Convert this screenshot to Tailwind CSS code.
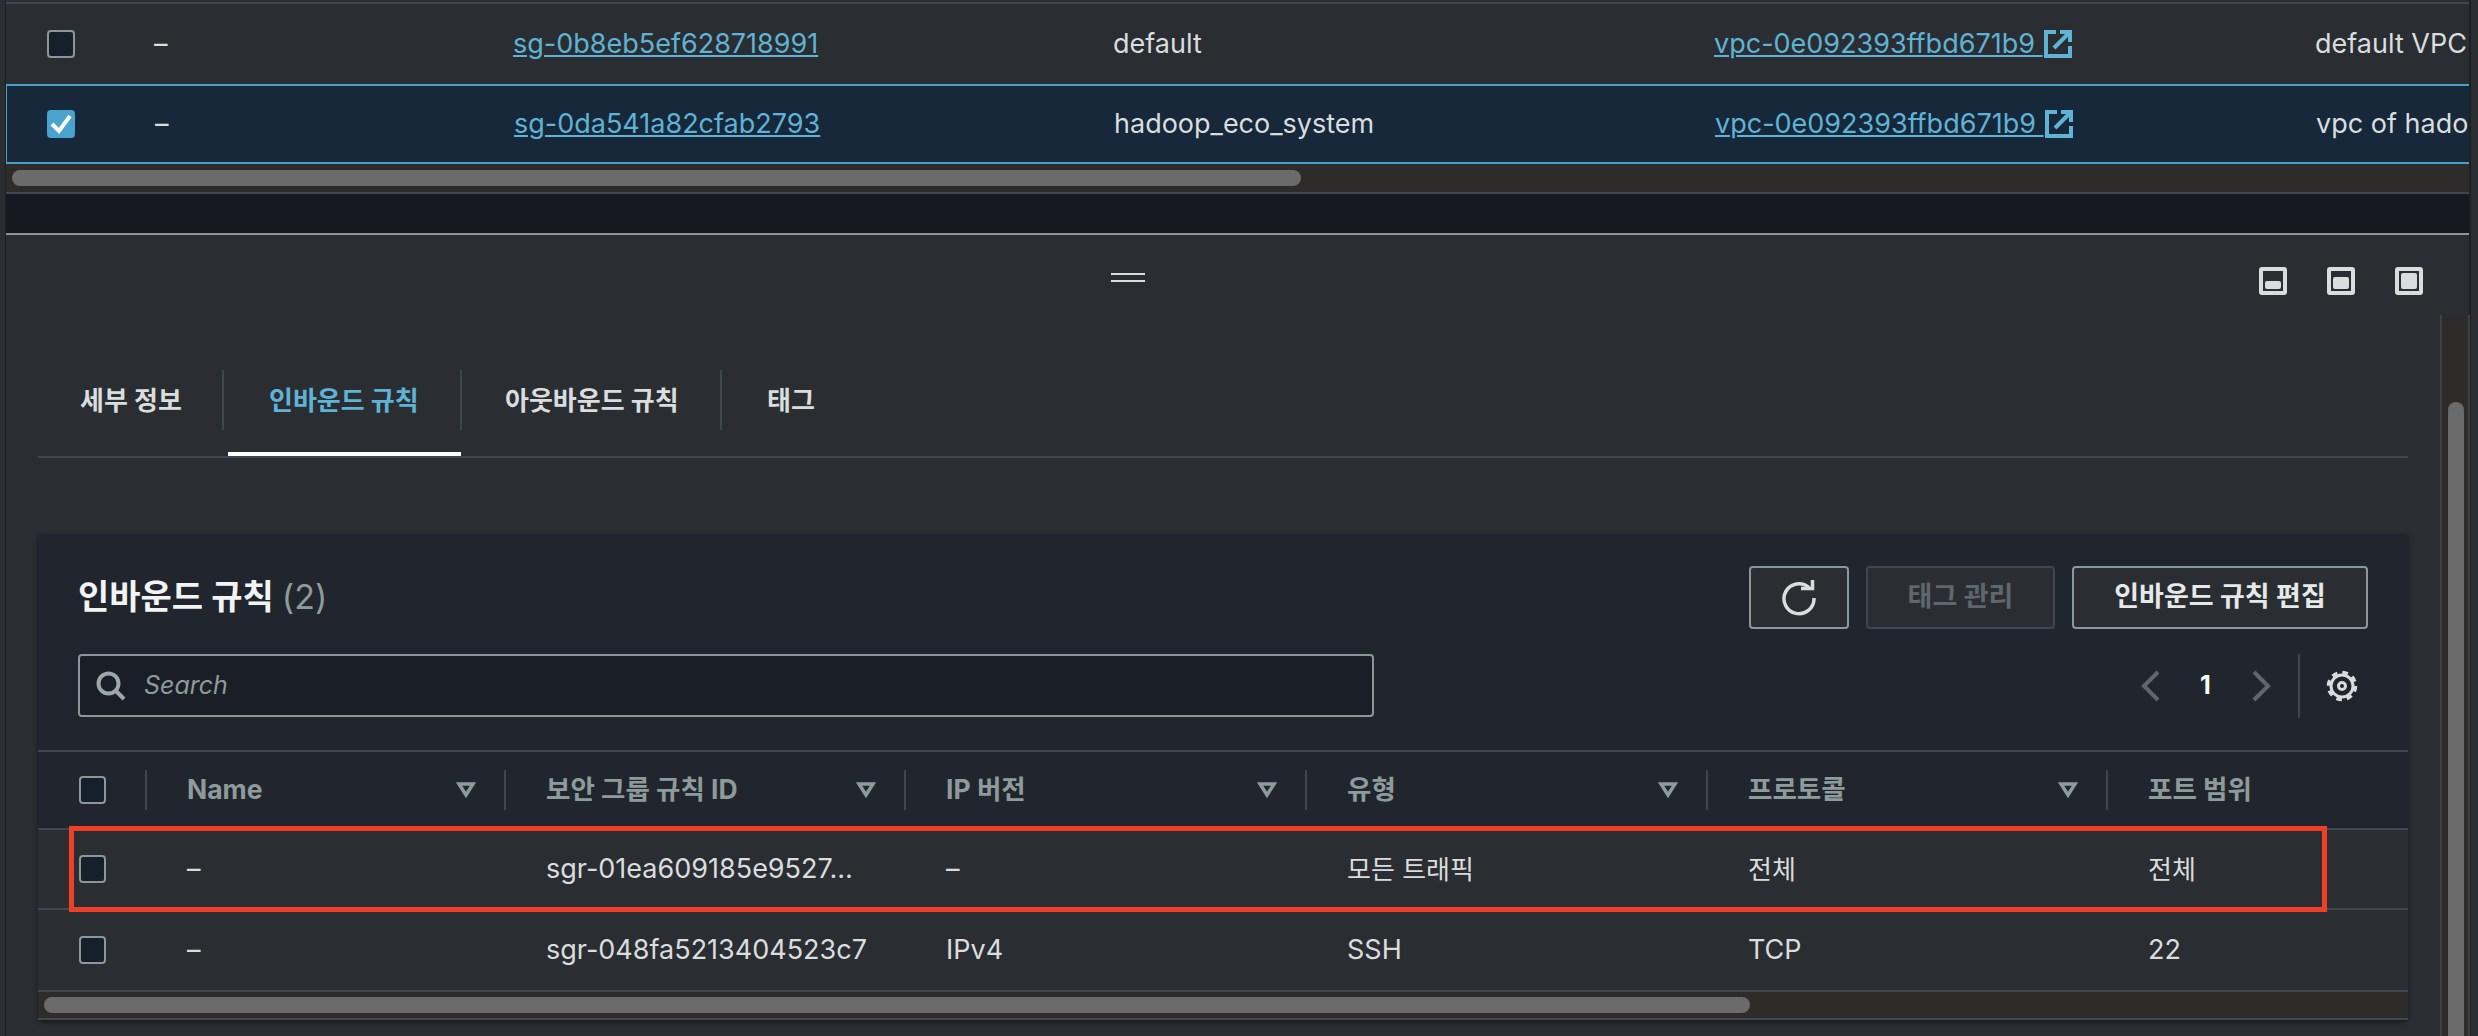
<!DOCTYPE html>
<html lang="ko">
<head>
    <meta charset="UTF-8">
    <title>Security Groups - Inbound Rules</title>
    <script src="https://cdn.jsdelivr.net/npm/@tailwindcss/browser@4"></script>
</head>
<body class="bg-[#2a2e33]">
<div class="relative w-[2478px] h-[1036px] overflow-hidden bg-[#2a2e33] text-[27px] text-[#d9dddd] [font-family:'Inter','Noto_Sans_CJK_KR',sans-serif]">
    <div class="ml-[5px] w-[2466px] h-full border-l border-r-2 border-[#1d2025] flex flex-col">

        <!-- Security group list -->
        <div class="h-[2px]"></div>
        <div class="h-[2px] bg-[#414750]"></div>
        <div class="h-[80px] grid grid-cols-[148px_359px_600px_601px_601px_1fr] items-center overflow-hidden">
            <div class="pl-[41px]"><div class="w-[28px] h-[28px] rounded-[4px] border-2 border-[#8d9799] bg-[#16202c]"></div></div>
            <div>–</div>
            <div><a href="#" class="text-[#5fb3d5] underline">sg-0b8eb5ef628718991</a></div>
            <div>default</div>
            <div>
                <a href="#" class="inline-flex items-center text-[#5fb3d5] underline whitespace-pre">vpc-0e092393ffbd671b9&nbsp;<svg class="w-[28px] h-[28px] ml-[1px]" viewBox="0 0 28 28" fill="none" stroke="#5fb3d5" stroke-width="4"><path d="M12 2H2v24h24V16"/><path d="M10 18 24 4"/><path d="M16 2h10v10" stroke-width="4"/></svg></a>
            </div>
            <div class="whitespace-nowrap">default VPC</div>
        </div>
        <div class="h-[80px] grid grid-cols-[148px_359px_600px_601px_601px_1fr] items-center overflow-hidden bg-[#16283a] border-y-2 border-l border-[#4a9fc9]">
            <div class="pl-[40px]">
                <div class="w-[28px] h-[28px] rounded-[4px] bg-[#4aa3cd] flex items-center justify-center">
                    <svg class="w-[22px] h-[22px]" viewBox="0 0 22 22" fill="none" stroke="#fff" stroke-width="4"><path d="M2 11l7 7L20 3"/></svg>
                </div>
            </div>
            <div>–</div>
            <div><a href="#" class="text-[#5fb3d5] underline">sg-0da541a82cfab2793</a></div>
            <div>hadoop_eco_system</div>
            <div>
                <a href="#" class="inline-flex items-center text-[#5fb3d5] underline whitespace-pre">vpc-0e092393ffbd671b9&nbsp;<svg class="w-[28px] h-[28px] ml-[1px]" viewBox="0 0 28 28" fill="none" stroke="#5fb3d5" stroke-width="4"><path d="M12 2H2v24h24V16"/><path d="M10 18 24 4"/><path d="M16 2h10v10" stroke-width="4"/></svg></a>
            </div>
            <div class="whitespace-nowrap overflow-hidden">vpc of hadoop_eco_system</div>
        </div>
        <div class="h-[28px] bg-[#2d2c2b] flex items-center pl-[6px]">
            <div class="w-[1289px] h-[16px] rounded-full bg-[#6b6b6b]"></div>
        </div>
        <div class="h-[2px] bg-[#414750]"></div>
        <div class="h-[39px] bg-[#16191f]"></div>
        <div class="h-[2px] bg-[#8d9799]"></div>

        <!-- Split panel -->
        <div class="flex-1 pl-[32px] pr-[61px]">
            <div class="h-[92px] flex items-center -mr-[15px]">
                <div class="ml-[1073px] w-[34px] h-[9px] -mt-[8px] border-y-2 border-[#d9dddd]"></div>
                <div class="ml-auto flex gap-[40px]">
                    <svg class="w-[28px] h-[28px]" viewBox="0 0 28 28"><rect x="2" y="2" width="24" height="24" rx="1" fill="none" stroke="#d9dddd" stroke-width="4"/><rect x="6" y="14" width="16" height="8" rx="2" fill="#d9dddd"/></svg>
                    <svg class="w-[28px] h-[28px]" viewBox="0 0 28 28"><rect x="2" y="2" width="24" height="24" rx="1" fill="none" stroke="#d9dddd" stroke-width="4"/><rect x="6" y="10" width="16" height="12" rx="2" fill="#d9dddd"/></svg>
                    <svg class="w-[28px] h-[28px]" viewBox="0 0 28 28"><rect x="2" y="2" width="24" height="24" rx="1" fill="none" stroke="#d9dddd" stroke-width="4"/><rect x="6" y="6" width="16" height="16" rx="2" fill="#d9dddd"/></svg>
                </div>
            </div>

            <!-- Tabs -->
            <div class="mt-[43px] h-[88px] border-b-2 border-[#414750] flex font-bold text-[26px]">
                <div class="w-[186px] h-[60px] border-r-2 border-[#414750] pl-[42px] flex items-center">세부 정보</div>
                <div class="w-[238px] flex flex-col">
                    <div class="h-[60px] border-r-2 border-[#414750] pl-[45px] flex items-center text-[#5fb3d5]">인바운드 규칙</div>
                    <div class="mt-auto ml-[4px] w-[233px] h-[4px] bg-white"></div>
                </div>
                <div class="w-[260px] h-[60px] border-r-2 border-[#414750] pl-[43px] flex items-center">아웃바운드 규칙</div>
                <div class="h-[60px] pl-[45px] flex items-center">태그</div>
            </div>

            <!-- Inbound rules card -->
            <div class="mt-[76px] h-[486px] rounded-[4px] bg-[#21252d] pt-[32px] shadow-[0_2px_4px_rgba(0,0,0,0.5)] flex flex-col">
                <div class="h-[63px] pl-[40px] pr-[40px] flex items-center">
                    <h2 class="text-[34px] -mt-[2px] font-bold text-[#f2f3f3]">인바운드 규칙 <span class="font-normal text-[#8d9b9b]">(2)</span></h2>
                    <div class="ml-auto flex gap-[17px] text-[27px] font-bold">
                        <button class="w-[100px] h-[63px] rounded-[4px] border-2 border-[#8d9799] bg-[#2a2e33] flex items-center justify-center">
                            <svg class="w-[36px] h-[36px]" viewBox="0 0 36 36" fill="none" stroke="#d9dddd" stroke-width="3.5"><path d="M28 7.5A15 15 0 1 0 33 18"/><path d="M20 8.5h11.5V0" /></svg>
                        </button>
                        <button class="w-[189px] h-[63px] rounded-[4px] border-2 border-[#414750] bg-[#2a2e33] text-[#5f666e]">태그 관리</button>
                        <button class="w-[296px] h-[63px] rounded-[4px] border-2 border-[#8d9799] bg-[#2a2e33] text-[#e6e9e9]">인바운드 규칙 편집</button>
                    </div>
                </div>
                <div class="mt-[25px] h-[63px] pl-[40px] flex items-center">
                    <div class="w-[1296px] h-[63px] rounded-[4px] border-2 border-[#8d9799] bg-[#1a1e26] flex items-center pl-[16px]">
                        <svg class="w-[30px] h-[30px]" viewBox="0 0 30 30" fill="none" stroke="#9aa8a8" stroke-width="4"><circle cx="12.5" cy="12.5" r="10"/><path d="M20 20l8 8"/></svg>
                        <span class="ml-[18px] italic text-[25px] text-[#8d9b9b]">Search</span>
                    </div>
                    <svg class="ml-[766px] w-[20px] h-[32px]" viewBox="0 0 20 32" fill="none" stroke="#5f666e" stroke-width="4"><path d="M18 2 4 16l14 14"/></svg>
                    <span class="ml-[40px] w-[12px] font-bold text-[25px] text-white">1</span>
                    <svg class="ml-[40px] w-[20px] h-[32px]" viewBox="0 0 20 32" fill="none" stroke="#5f666e" stroke-width="4"><path d="M2 2l14 14L2 30"/></svg>
                    <div class="ml-[26px] w-[2px] h-[64px] bg-[#414750]"></div>
                    <svg class="ml-[25px] w-[34px] h-[34px]" viewBox="0 0 34 34" fill="none" stroke="#d9dddd"><circle cx="17" cy="17" r="11" stroke-width="3"/><circle cx="17" cy="17" r="13.5" stroke-width="3.5" stroke-dasharray="5.6 5"/><circle cx="17" cy="17" r="3.5" stroke-width="3"/></svg>
                </div>

                <!-- Rules table -->
                <div class="mt-[33px] h-[2px] bg-[#414750]"></div>
                <div class="h-[76px] grid grid-cols-[107px_359px_400px_401px_401px_400px_1fr] items-center font-bold text-[26.5px] text-[#8d9b9b]">
                    <div class="pl-[41px]"><div class="w-[27px] h-[28px] rounded-[4px] border-2 border-[#8d9799] bg-[#16202c]"></div></div>
                    <div class="h-[40px] border-l-2 border-[#414750] pl-[40px] pr-[28px] flex items-center justify-between">Name <svg class="w-[20px] h-[16px]" viewBox="0 0 20 16" fill="none" stroke="#8d9b9b" stroke-width="3.5"><path d="M3 2h14l-7 11z"/></svg></div>
                    <div class="h-[40px] border-l-2 border-[#414750] pl-[40px] pr-[28px] flex items-center justify-between">보안 그룹 규칙 ID <svg class="w-[20px] h-[16px]" viewBox="0 0 20 16" fill="none" stroke="#8d9b9b" stroke-width="3.5"><path d="M3 2h14l-7 11z"/></svg></div>
                    <div class="h-[40px] border-l-2 border-[#414750] pl-[40px] pr-[28px] flex items-center justify-between">IP 버전 <svg class="w-[20px] h-[16px]" viewBox="0 0 20 16" fill="none" stroke="#8d9b9b" stroke-width="3.5"><path d="M3 2h14l-7 11z"/></svg></div>
                    <div class="h-[40px] border-l-2 border-[#414750] pl-[40px] pr-[28px] flex items-center justify-between">유형 <svg class="w-[20px] h-[16px]" viewBox="0 0 20 16" fill="none" stroke="#8d9b9b" stroke-width="3.5"><path d="M3 2h14l-7 11z"/></svg></div>
                    <div class="h-[40px] border-l-2 border-[#414750] pl-[40px] pr-[28px] flex items-center justify-between">프로토콜 <svg class="w-[20px] h-[16px]" viewBox="0 0 20 16" fill="none" stroke="#8d9b9b" stroke-width="3.5"><path d="M3 2h14l-7 11z"/></svg></div>
                    <div class="h-[40px] border-l-2 border-[#414750] pl-[40px] flex items-center">포트 범위</div>
                </div>
                <div class="h-[2px] bg-[#414750]"></div>
                <div class="h-[78px] bg-[#2a2e33] grid grid-cols-[107px_359px_400px_401px_401px_400px_1fr] items-center">
                    <div class="pl-[41px]"><div class="w-[27px] h-[28px] rounded-[4px] border-2 border-[#8d9799] bg-[#16202c]"></div></div>
                    <div class="pl-[42px]">–</div>
                    <div class="pl-[42px] whitespace-nowrap">sgr-01ea609185e9527…</div>
                    <div class="pl-[42px]">–</div>
                    <div class="pl-[42px] text-[26px]">모든 트래픽</div>
                    <div class="pl-[42px] text-[26px]">전체</div>
                    <div class="pl-[42px] text-[26px]">전체</div>
                </div>
                <div class="h-[2px] bg-[#414750]"></div>
                <div class="h-[80px] bg-[#2a2e33] grid grid-cols-[107px_359px_400px_401px_401px_400px_1fr] items-center">
                    <div class="pl-[41px]"><div class="w-[27px] h-[28px] rounded-[4px] border-2 border-[#8d9799] bg-[#16202c]"></div></div>
                    <div class="pl-[42px]">–</div>
                    <div class="pl-[42px]">sgr-048fa5213404523c7</div>
                    <div class="pl-[42px]">IPv4</div>
                    <div class="pl-[42px]">SSH</div>
                    <div class="pl-[42px]">TCP</div>
                    <div class="pl-[42px]">22</div>
                </div>
                <div class="h-[2px] bg-[#414750]"></div>
                <div class="h-[26px] bg-[#2d2c2b] flex items-center pl-[6px]">
                    <div class="w-[1706px] h-[16px] rounded-full bg-[#6b6b6b]"></div>
                </div>
                <div class="h-[2px] bg-[#414750]"></div>
            </div>
        </div>
    </div>

    <!-- Panel scrollbar -->
    <div class="absolute left-[2440px] top-[315px] w-[30px] h-[721px] bg-[#2d2c2b] border-x-2 border-[#414141] pt-[87px] pl-[6px]">
        <div class="w-[16px] h-full rounded-t-full bg-[#6b6b6b]"></div>
    </div>

    <!-- Red annotation box -->
    <div class="absolute left-[69px] top-[826px] w-[2258px] h-[86px] border-[5px] border-[#ee4026]"></div>
</div>
</body>
</html>
